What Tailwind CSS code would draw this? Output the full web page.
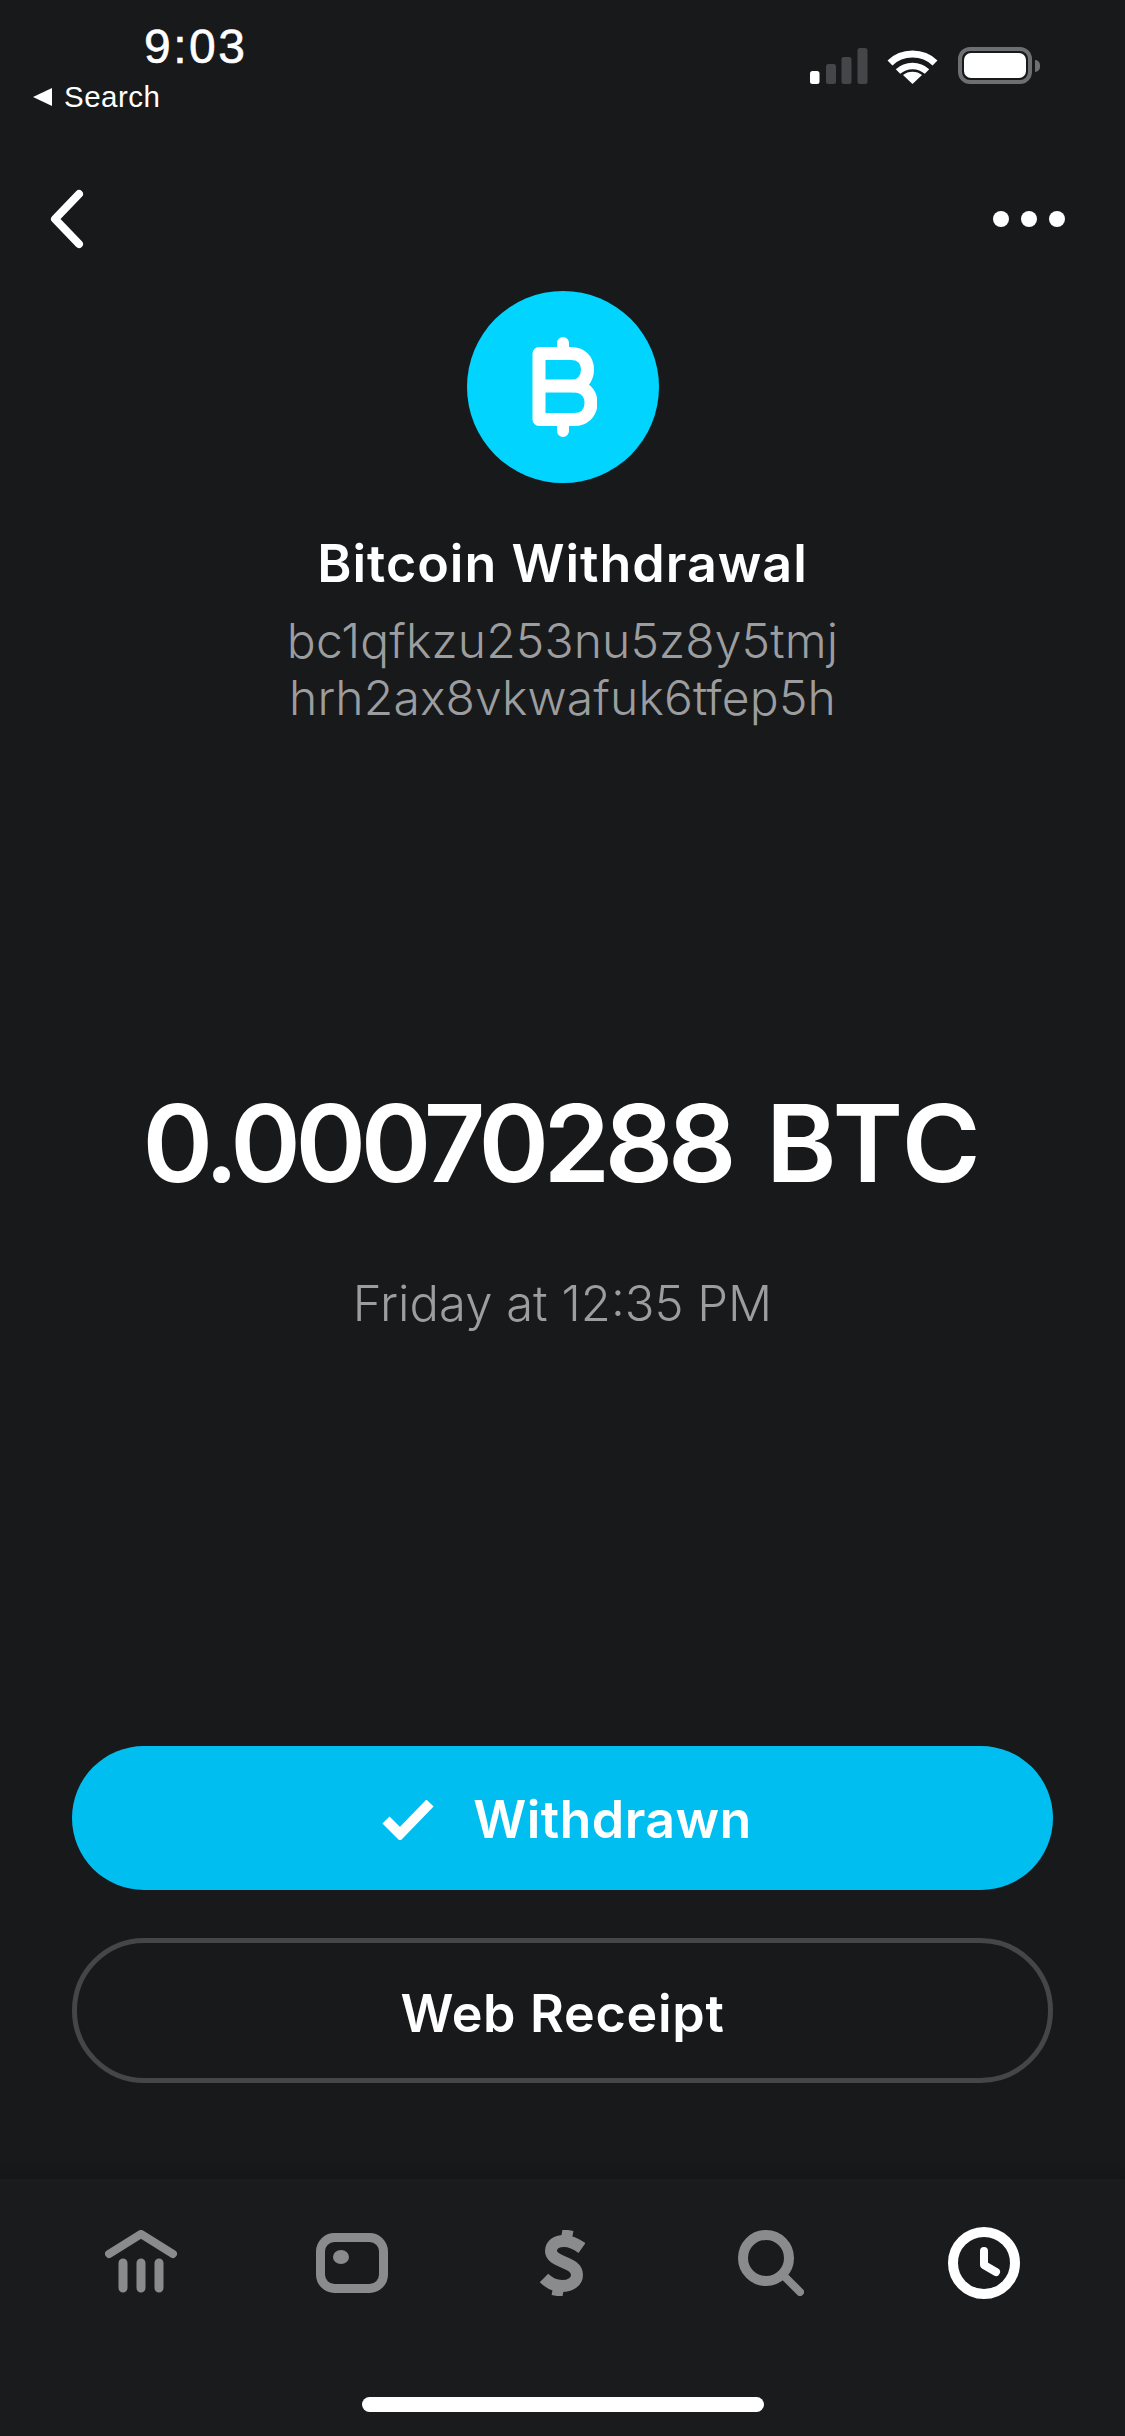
<!doctype html>
<html>
<head>
<meta charset="utf-8">
<script src="https://cdn.jsdelivr.net/npm/@tailwindcss/browser@4"></script>
</head>
<body class="m-0 bg-[#18191b]">
<div class="relative flex h-[2436px] w-[1125px] flex-col overflow-hidden bg-[#18191b] font-['Inter',sans-serif] text-white">

  <!-- status bar -->
  <div class="flex h-[179px] shrink-0 items-start justify-between pl-[33px] pr-[85px] pt-[20px]">
    <div class="flex flex-col">
      <div class="ml-[111px] font-['Liberation_Sans',sans-serif] text-[48px] leading-[54px] tracking-[2.5px] [-webkit-text-stroke:0.6px_white]">9:03</div>
      <div class="mt-[6px] flex items-center gap-[12px] font-['Liberation_Sans',sans-serif] text-[29.5px] leading-[34px] tracking-[0.5px]">
        <svg width="19" height="18" viewBox="0 0 19 18" class="block"><path d="M19 0V18L0 9Z" fill="#fff"/></svg>
        <span>Search</span>
      </div>
    </div>
    <div class="mt-[27px] flex items-end">
      <svg width="58" height="36" viewBox="0 0 58 36" class="block">
        <rect x="0" y="23" width="9.5" height="13" rx="2.5" fill="#fff"/>
        <rect x="16" y="16" width="10" height="20" rx="2.5" fill="#45464a"/>
        <rect x="31.5" y="9" width="10" height="27" rx="2.5" fill="#45464a"/>
        <rect x="47.5" y="0" width="10" height="36" rx="2.5" fill="#45464a"/>
      </svg>
      <svg width="51" height="36" viewBox="0 0 51 36" class="ml-[19px] block">
        <path d="M3 15C15 3 36 3 48 15" fill="none" stroke="#fff" stroke-width="7"/>
        <path d="M11 23.5C19 16 32 16 40 23.5" fill="none" stroke="#fff" stroke-width="6.5"/>
        <path d="M25.5 36L16 27C21 22.5 30 22.5 35 27Z" fill="#fff"/>
      </svg>
      <div class="ml-[20px] h-[37px] w-[74px] rounded-[12px] border-[4px] border-[#6e6f72] p-[2px]">
        <div class="h-full w-full rounded-[7px] bg-white"></div>
      </div>
      <div class="mb-[12px] ml-[3px] h-[12px] w-[5px] rounded-r-full bg-[#6e6f72]"></div>
    </div>
  </div>

  <!-- nav -->
  <div class="flex h-[80px] shrink-0 items-center justify-between pl-[50px] pr-[60px]">
    <svg width="34" height="60" viewBox="0 0 34 60" class="block">
      <path d="M29 5L5 30L29 55" fill="none" stroke="#fff" stroke-width="8" stroke-linecap="round" stroke-linejoin="round"/>
    </svg>
    <div class="flex gap-[12px]">
      <div class="h-[16px] w-[16px] rounded-full bg-white"></div>
      <div class="h-[16px] w-[16px] rounded-full bg-white"></div>
      <div class="h-[16px] w-[16px] rounded-full bg-white"></div>
    </div>
  </div>

  <!-- header -->
  <div class="mt-[32px] flex shrink-0 flex-col items-center">
    <div class="flex h-[192px] w-[192px] items-center justify-center rounded-full bg-[#00d4ff]">
      <svg width="68" height="102" viewBox="0 0 68 102" class="block">
        <path d="M34 7V14M34 88V95" fill="none" stroke="#fff" stroke-width="12" stroke-linecap="round"/>
        <path d="M10 17.5H42C52 17.5 58.5 24 58.5 33.5C58.5 43 52 50 45 50C55 50 62 57 62 67C62 77 55 83.5 45 83.5H10Z" fill="none" stroke="#fff" stroke-width="13" stroke-linejoin="round"/>
        <path d="M10 50H45" fill="none" stroke="#fff" stroke-width="13"/>
      </svg>
    </div>
    <div class="mt-[51px] text-[52px] font-semibold leading-[60px] tracking-[1px]">Bitcoin Withdrawal</div>
    <div class="mt-[18px] text-center text-[48px] font-light leading-[57px] tracking-[0.15px] text-[#9c9d9f]">bc1qfkzu253nu5z8y5tmj<br>hrh2ax8vkwafuk6tfep5h</div>
  </div>

  <!-- amount -->
  <div class="mt-[357px] shrink-0 text-center text-[107px] font-semibold leading-[120px] [word-spacing:8px]"><span class="tracking-[-5.4px]">0.00070288</span> <span class="tracking-[2px]">BTC</span></div>
  <div class="mt-[72px] shrink-0 text-center text-[49px] font-light leading-[57px] text-[#9c9d9f]">Friday at 12:35 PM</div>

  <!-- buttons -->
  <div class="mt-[414px] flex shrink-0 flex-col gap-[48px] px-[72px]">
    <div class="flex h-[144px] items-center justify-center gap-[39px] rounded-full bg-[#00bff0] pl-[9px] pt-[4px]">
      <svg width="52" height="40" viewBox="0 0 52 40" class="block">
        <path d="M4 20L18 34L48 3" fill="none" stroke="#fff" stroke-width="10"/>
      </svg>
      <span class="text-[52px] font-semibold leading-[60px] tracking-[0.4px]">Withdrawn</span>
    </div>
    <div class="flex h-[145px] items-center justify-center rounded-full border-[5px] border-[#454648] pt-[6px]">
      <span class="text-[52px] font-semibold leading-[60px] tracking-[0.7px]">Web Receipt</span>
    </div>
  </div>

  <!-- tab bar -->
  <div class="absolute bottom-0 left-0 right-0 h-[257px] bg-[#191b1d]">
    <div class="absolute left-0 right-0 top-[-20px] h-[20px] bg-gradient-to-b from-transparent to-[#151618]"></div>
    <div class="flex items-start pl-[105px] pt-[48px]">
      <svg width="72" height="66" viewBox="0 0 72 66" class="mt-[3px] block">
        <path d="M4 24L36 4L68 24" fill="none" stroke="#8a8b8d" stroke-width="8" stroke-linecap="round" stroke-linejoin="round"/>
        <path d="M18 33V58M36 33V58M54 33V58" fill="none" stroke="#8a8b8d" stroke-width="9" stroke-linecap="round"/>
      </svg>
      <svg width="72" height="60" viewBox="0 0 72 60" class="ml-[139px] mt-[6px] block">
        <rect x="4.5" y="4.5" width="63" height="51" rx="14" fill="none" stroke="#8a8b8d" stroke-width="9"/>
        <ellipse cx="25" cy="24" rx="8" ry="7" fill="#8a8b8d"/>
      </svg>
      <svg width="46" height="66" viewBox="0 0 46 66" class="ml-[151px] mt-[3px] block">
        <path d="M43 18C36 13 30 11 25 11C17 11 12 15 12 21C12 33 38 31 38 45C38 52 31 56 23 56C17 56 11 54 5 48" fill="none" stroke="#8a8b8d" stroke-width="12"/>
        <path d="M29 0L27 11M20 55L18 66" fill="none" stroke="#8a8b8d" stroke-width="11"/>
      </svg>
      <svg width="66" height="66" viewBox="0 0 66 66" class="ml-[153px] mt-[3px] block">
        <circle cx="28" cy="28" r="23" fill="none" stroke="#8a8b8d" stroke-width="10"/>
        <path d="M45 45L62 62" fill="none" stroke="#8a8b8d" stroke-width="8" stroke-linecap="round"/>
      </svg>
      <svg width="72" height="72" viewBox="0 0 72 72" class="ml-[144px] block">
        <circle cx="36" cy="36" r="31" fill="none" stroke="#fff" stroke-width="10"/>
        <path d="M36 24V38L48 45" fill="none" stroke="#fff" stroke-width="8" stroke-linecap="round" stroke-linejoin="round"/>
      </svg>
    </div>
    <div class="absolute bottom-[24px] left-[362px] h-[15px] w-[402px] rounded-full bg-white"></div>
  </div>
</div>
</body>
</html>
